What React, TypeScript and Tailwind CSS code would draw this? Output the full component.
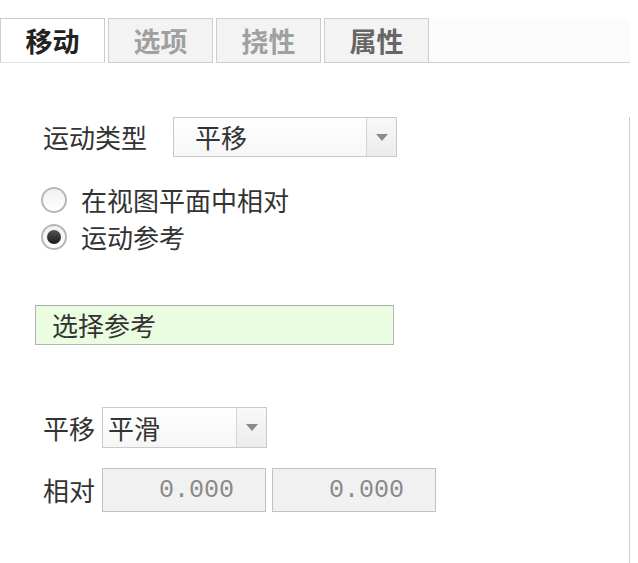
import React from 'react';

const tabs = [
  { label: '移动', active: true, tone: 'text-[#222]' },
  { label: '选项', active: false, tone: 'text-[#a0a0a0]' },
  { label: '挠性', active: false, tone: 'text-[#a0a0a0]' },
  { label: '属性', active: false, tone: 'text-[#666]' },
];

const Arrow = () => (
  <svg width="12" height="7" viewBox="0 0 12 7">
    <path d="M0 0 L12 0 L6 7 Z" fill="#8a8a8a" />
  </svg>
);

const Select: React.FC<{ value: string; className: string; textPad: string }> = ({ value, className, textPad }) => (
  <div className={`flex items-stretch border border-[#c9c9c9] bg-gradient-to-b from-white to-[#f6f6f6] ${className}`}>
    <div className={`flex-1 flex items-center leading-none text-[#333] ${textPad}`}>{value}</div>
    <div className="w-[30px] flex items-center justify-center border-l border-[#d4d4d4] bg-gradient-to-b from-[#f8f8f8] to-[#ececec]">
      <Arrow />
    </div>
  </div>
);

const Radio: React.FC<{ checked?: boolean }> = ({ checked }) => (
  <div className="w-[26px] h-[26px] rounded-full border-2 border-[#b8b8b8] bg-gradient-to-b from-[#f0f0f0] to-white flex items-center justify-center">
    {checked && <div className="w-[14px] h-[14px] rounded-full bg-gradient-to-b from-[#555] to-[#1a1a1a]" />}
  </div>
);

const NumberBox: React.FC<{ value: string }> = ({ value }) => (
  <div className="w-[164px] h-[44px] border border-[#c2c2c2] bg-[#f1f1f1] flex items-center justify-end pr-[31px] font-['Liberation_Mono',monospace] text-[25px] text-[#8a8a8a] leading-none">
    {value}
  </div>
);

export default function App() {
  return (
    <div className="w-[638px] h-[563px] overflow-hidden bg-white font-['Noto_Sans_CJK_SC',sans-serif] text-[26px] text-[#333]">
      {/* tab strip */}
      <div className="flex pt-[18px] w-[630px]">
        {tabs.map((t) => (
          <div
            key={t.label}
            className={`w-[105px] h-[45px] mr-[3px] flex items-center justify-center border border-[#cdcdcd] font-bold text-[27px] leading-none ${t.tone} ${
              t.active ? 'bg-white border-b-[#e4e4e4]' : 'bg-[#f3f3f3]'
            }`}
          >
            {t.label}
          </div>
        ))}
        <div className="flex-1 -ml-[3px] border-b border-[#cdcdcd] bg-[#fcfcfc]" />
      </div>

      {/* panel body */}
      <div className="w-[630px] h-[490px] border-r border-[#cdcdcd] pl-[35px]">
        <div className="flex items-center h-[40px] mt-[54px] pl-[8px]">
          <span className="w-[130px] leading-none">运动类型</span>
          <Select value="平移" className="w-[224px] h-[40px]" textPad="pl-[21px]" />
        </div>

        <div className="mt-[24px] pl-[6px]">
          <div className="flex items-center h-[37px] gap-[14px]">
            <Radio />
            <span className="leading-none">在视图平面中相对</span>
          </div>
          <div className="flex items-center h-[37px] gap-[14px]">
            <Radio checked />
            <span className="leading-none">运动参考</span>
          </div>
        </div>

        <div className="mt-[50px] w-[359px] h-[40px] border border-[#b4b4b4] border-t-[#a8a8a8] bg-[#ebfde0] flex items-center pl-[16px] leading-none">
          选择参考
        </div>

        <div className="flex items-center mt-[62px] h-[41px] pl-[8px]">
          <span className="w-[59px] leading-none">平移</span>
          <Select value="平滑" className="w-[165px] h-[41px]" textPad="pl-[5px]" />
        </div>

        <div className="flex items-center mt-[20px] h-[44px] pl-[8px]">
          <span className="w-[59px] leading-none">相对</span>
          <div className="flex gap-[6px]">
            <NumberBox value="0.000" />
            <NumberBox value="0.000" />
          </div>
        </div>
      </div>
    </div>
  );
}
